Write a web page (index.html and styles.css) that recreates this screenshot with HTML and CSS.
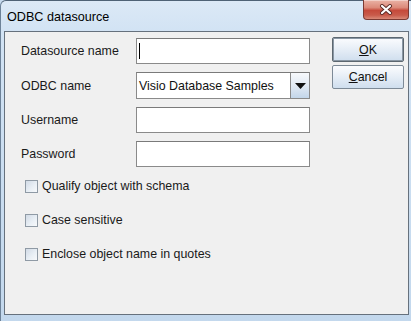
FILE: index.html
```html
<!DOCTYPE html>
<html>
<head>
<meta charset="utf-8">
<link rel="stylesheet" href="styles.css">
</head>
<body>
<div class="window">
  <div class="titlebar">
    <span class="title">ODBC datasource</span>
    <div class="close">
      <svg width="14" height="11" viewBox="0 0 14 11">
        <path d="M3 2 L11 9 M11 2 L3 9" stroke="#5a2a25" stroke-width="4" stroke-linecap="round"/>
        <path d="M3 2 L11 9 M11 2 L3 9" stroke="#ffffff" stroke-width="2.2" stroke-linecap="round"/>
      </svg>
    </div>
  </div>
  <div class="content">
    <div class="form">
      <div class="grid">
        <label class="lbl">Datasource name</label>
        <div class="field"><span class="caret"></span></div>
        <label class="lbl">ODBC name</label>
        <div class="combo">
          <span class="combo-text">Visio Database Samples</span>
          <span class="combo-btn">
            <svg width="11" height="6" viewBox="0 0 11 6"><path d="M0 0 H11 L5.5 6 Z" fill="#111"/></svg>
          </span>
        </div>
        <label class="lbl">Username</label>
        <div class="field"></div>
        <label class="lbl">Password</label>
        <div class="field"></div>
      </div>
      <div class="checks">
        <div class="check"><span class="box"></span><span>Qualify object with schema</span></div>
        <div class="check"><span class="box"></span><span>Case sensitive</span></div>
        <div class="check"><span class="box"></span><span>Enclose object name in quotes</span></div>
      </div>
    </div>
    <div class="buttons">
      <div class="btn btn-default"><span class="u">O</span>K</div>
      <div class="btn"><span class="u">C</span>ancel</div>
    </div>
  </div>
</div>
</body>
</html>
```

FILE: styles.css
```css
html, body {
  margin: 0;
  padding: 0;
  background: #c6daee;
}
body {
  width: 411px;
  height: 321px;
  overflow: hidden;
  font-family: "Liberation Sans", Arial, sans-serif;
  font-size: 12.4px;
  color: #1a1a1a;
}
.window {
  width: 411px;
  height: 321px;
  box-sizing: border-box;
  border-top: 1px solid #4f6275;
  border-left: 1px solid #6d8298;
  border-radius: 6px 0 0 0;
  background: linear-gradient(to bottom, #dce9f6 0px, #d2e3f4 30px, #c3d8ed 100%);
  display: flex;
  flex-direction: column;
}
.titlebar {
  height: 30px;
  display: flex;
  justify-content: space-between;
  align-items: flex-start;
  flex: none;
}
.title {
  font-size: 12.6px;
  color: #000;
  padding: 9px 0 0 6px;
  line-height: 14px;
}
.close {
  width: 44px;
  height: 19px;
  margin-right: 2px;
  margin-top: -1px;
  border: 1px solid #7b3a33;
  border-top: none;
  border-radius: 0 0 4px 4px;
  background: linear-gradient(to bottom, #eab3a6 0%, #dc8a7a 40%, #c54a3b 55%, #c95b4b 80%, #d98a78 100%);
  display: flex;
  align-items: center;
  justify-content: center;
  box-shadow: inset 0 1px 0 rgba(255,255,255,0.4);
}
.content {
  flex: 1;
  margin: 0 2px 6px 3px;
  border: 1px solid #66717d;
  background: #f0f0f0;
  display: flex;
  align-items: flex-start;
  padding: 5px 0 0 16px;
}
.form {
  display: flex;
  flex-direction: column;
  margin-top: 1px;
}
.grid {
  display: grid;
  grid-template-columns: 115px 174px;
  grid-template-rows: 26px 27px 26px 26px;
  row-gap: 8px;
  align-items: center;
}
.lbl {
  line-height: 14px;
}
.field, .combo {
  box-sizing: border-box;
  height: 100%;
  border: 1px solid #8a8a8a;
  border-top-color: #7a7a7a;
  background: #fff;
}
.field {
  display: flex;
  align-items: center;
  padding-left: 2px;
}
.caret {
  width: 1px;
  height: 16px;
  background: #000;
}
.combo {
  display: flex;
  align-items: stretch;
}
.combo-text {
  flex: 1;
  display: flex;
  align-items: center;
  padding-left: 2px;
  color: #111;
}
.combo-btn {
  width: 18px;
  border-left: 1px solid #8a8a8a;
  background: linear-gradient(to bottom, #f7f9fc 0%, #e2eaf4 50%, #c3d6ea 100%);
  display: flex;
  align-items: center;
  justify-content: center;
}
.checks {
  display: flex;
  flex-direction: column;
  row-gap: 8px;
  margin-top: 6px;
  margin-left: 4px;
}
.check {
  height: 26px;
  display: flex;
  align-items: center;
  gap: 4px;
}
.box {
  width: 13px;
  height: 13px;
  box-sizing: border-box;
  border: 1px solid #8f9aa5;
  background: linear-gradient(135deg, #d2dbe6 0%, #eaf0f6 60%, #f7f9fb 100%);
}
.buttons {
  display: flex;
  flex-direction: column;
  gap: 3px;
  margin-left: 22px;
}
.btn {
  width: 72px;
  height: 24px;
  box-sizing: border-box;
  border: 1px solid #7d8a97;
  border-radius: 2px;
  background: linear-gradient(to bottom, #fbfcfe 0%, #e8eff7 45%, #cfdeee 100%);
  display: flex;
  align-items: center;
  justify-content: center;
  color: #111;
}
.btn-default {
  height: 25px;
  border: 1px solid #5c6770;
  box-shadow: inset 0 0 0 1px #8a97a4;
}
.u {
  text-decoration: underline;
}
```
